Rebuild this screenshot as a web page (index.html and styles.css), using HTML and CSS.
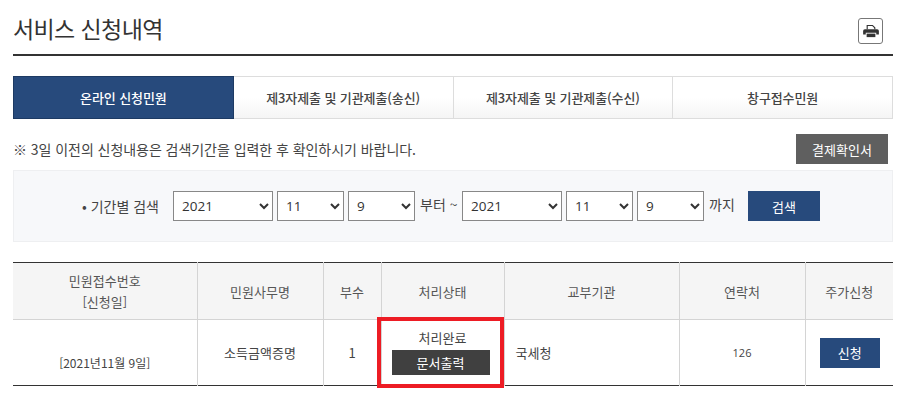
FILE: index.html
```html
<!DOCTYPE html>
<html lang="ko">
<head>
    <meta charset="UTF-8">
    <meta name="viewport" content="width=device-width, initial-scale=1.0">
    <title>서비스 신청내역</title>
    <link rel="stylesheet" href="styles.css">
</head>
<body>
    <div class="container">
        <div class="title-bar">
            <h1>서비스 신청내역</h1>
            <button class="print-btn" type="button" aria-label="인쇄">
                <svg width="16" height="14" viewBox="0 0 18 16">
                    <path d="M4 6V1h7l3 3v2h-1.300V4.600L10.400 2.200H5.300V6z" fill="#333"/>
                    <path d="M2 6h14a2 2 0 0 1 2 2v4h-3v-2H3v2H0V8a2 2 0 0 1 2-2z" fill="#333"/>
                    <path d="M4 11h10v4H4z" fill="#333"/>
                </svg>
            </button>
        </div>

        <ul class="tabs">
            <li class="active">온라인 신청민원</li>
            <li>제3자제출 및 기관제출(송신)</li>
            <li>제3자제출 및 기관제출(수신)</li>
            <li>창구접수민원</li>
        </ul>

        <div class="notice-row">
            <p>※ 3일 이전의 신청내용은 검색기간을 입력한 후 확인하시기 바랍니다.</p>
            <button class="btn-gray" type="button">결제확인서</button>
        </div>

        <form class="search-box">
            <span class="search-label">• 기간별 검색</span>
            <select class="sel-year"><option>2021</option></select>
            <select class="sel-small"><option>11</option></select>
            <select class="sel-small"><option>9</option></select>
            <span class="from">부터 ~</span>
            <select class="sel-year"><option>2021</option></select>
            <select class="sel-small"><option>11</option></select>
            <select class="sel-small"><option>9</option></select>
            <span class="until">까지</span>
            <button class="btn-search" type="button">검색</button>
        </form>

        <table class="result">
            <colgroup>
                <col class="c1"><col class="c2"><col class="c3"><col class="c4">
                <col class="c5"><col class="c6"><col class="c7">
            </colgroup>
            <thead>
                <tr>
                    <th>민원접수번호<br>[신청일]</th>
                    <th>민원사무명</th>
                    <th>부수</th>
                    <th>처리상태</th>
                    <th>교부기관</th>
                    <th>연락처</th>
                    <th>주가신청</th>
                </tr>
            </thead>
            <tbody>
                <tr>
                    <td class="date">[2021년11월 9일]</td>
                    <td>소득금액증명</td>
                    <td>1</td>
                    <td class="status">
                        처리완료
                        <button class="btn-dark" type="button">문서출력</button>
                        <div class="highlight"></div>
                    </td>
                    <td class="left">국세청</td>
                    <td class="tel">126</td>
                    <td class="apply"><button class="btn-apply" type="button">신청</button></td>
                </tr>
            </tbody>
        </table>
    </div>
</body>
</html>
```

FILE: styles.css
```css
* {
    box-sizing: border-box;
}

html, body {
    height: 400px;
    overflow: hidden;
}

body {
    margin: 0;
    background-color: #fff;
    color: #444;
    font-family: "Noto Sans CJK KR", "Noto Sans", sans-serif;
    font-size: 13px;
}

button {
    border: 0;
    padding: 0;
    font-family: inherit;
    cursor: pointer;
}

.container {
    width: 880px;
    margin-left: 13px;
}

.title-bar {
    display: flex;
    justify-content: space-between;
    height: 56px;
    padding-top: 11px;
    border-bottom: 2px solid #333;
}

h1 {
    margin: 0;
    font-size: 23px;
    font-weight: 400;
    line-height: 34px;
    color: #333;
    letter-spacing: -0.6px;
}

.print-btn {
    display: flex;
    align-items: center;
    justify-content: center;
    width: 25px;
    height: 26px;
    margin: 7px 10px 0 0;
    background-color: #fff;
    border: 1px solid #777;
    border-radius: 3px;
}

.tabs {
    display: flex;
    height: 43px;
    margin: 20px 0 0;
    padding: 0;
    list-style-type: none;
}

.tabs li {
    flex: 1;
    display: flex;
    align-items: center;
    justify-content: center;
    border: 1px solid #ddd;
    border-left: 0;
    background: linear-gradient(#fff 50%, #f5f5f5);
    font-size: 13px;
    font-weight: 500;
    letter-spacing: -0.1px;
    color: #444;
}

.tabs li.active {
    background: #274a7c;
    border: 1px solid #1d3a63;
    color: #fff;
}

.notice-row {
    display: flex;
    align-items: center;
    justify-content: space-between;
    height: 30px;
    margin-top: 15px;
    padding-right: 5px;
}

.notice-row p {
    margin: 0;
    font-size: 14px;
    letter-spacing: -0.05px;
    color: #444;
}

.btn-gray {
    width: 92px;
    height: 30px;
    background-color: #5f5f5f;
    color: #fff;
    font-size: 13px;
}

.search-box {
    display: flex;
    align-items: center;
    height: 72px;
    margin-top: 6px;
    padding-left: 68px;
    background-color: #f7f8fa;
    border: 1px solid #eeeff1;
    color: #444;
}

.search-label {
    width: 91px;
    font-size: 14px;
}

.search-box select {
    height: 30px;
    margin-right: 4px;
    padding-left: 4px;
    background-color: #fff;
    border: 1px solid #888;
    font-family: "Open Sans", sans-serif;
    font-size: 13.5px;
    color: #333;
}

.sel-year {
    width: 100px;
}

.sel-small {
    width: 67px;
}

.from {
    width: 42px;
    margin-left: 1px;
    padding-bottom: 4px;
    font-size: 14px;
    white-space: nowrap;
}

.until {
    width: 39px;
    margin-left: 1px;
    padding-bottom: 4px;
    font-size: 14px;
}

.btn-search {
    width: 72px;
    height: 30px;
    background-color: #274a7c;
    color: #fff;
    font-size: 13px;
}

.result {
    width: 880px;
    margin-top: 20px;
    border-collapse: collapse;
    table-layout: fixed;
    border-top: 1px solid #333;
    border-bottom: 1px solid #333;
}

.c1 { width: 184px; }
.c2 { width: 126px; }
.c3 { width: 58px; }
.c4 { width: 123px; }
.c5 { width: 175px; }
.c6 { width: 126px; }
.c7 { width: 88px; }

.result th {
    height: 57px;
    padding: 0;
    background-color: #f5f5f5;
    border-left: 1px solid #d4d4d4;
    border-bottom: 1px solid #d4d4d4;
    font-size: 13px;
    font-weight: 400;
    line-height: 21px;
    color: #555;
}

.result td {
    height: 66px;
    padding: 0;
    border-left: 1px solid #d4d4d4;
    text-align: center;
    font-size: 13px;
    color: #444;
}

.result th:first-child,
.result td:first-child {
    border-left: 0;
}

.result td.date {
    padding-top: 20px;
    font-size: 12px;
}

.result td.left {
    padding-left: 11px;
    text-align: left;
}

.result td.tel {
    font-family: "Open Sans", sans-serif;
    font-size: 11px;
}

.result td.status {
    position: relative;
    padding-bottom: 2px;
    line-height: 18px;
}

.result td.apply {
    padding-left: 1px;
}

.btn-dark {
    display: block;
    width: 98px;
    height: 25px;
    margin: 3px 0 0 10px;
    background-color: #404040;
    color: #fff;
    font-size: 13px;
}

.highlight {
    position: absolute;
    top: -3px;
    left: -5px;
    width: 127px;
    height: 71px;
    border: 4px solid #ed1c24;
}

.btn-apply {
    width: 60px;
    height: 30px;
    background-color: #274a7c;
    color: #fff;
    font-size: 13px;
}
```
